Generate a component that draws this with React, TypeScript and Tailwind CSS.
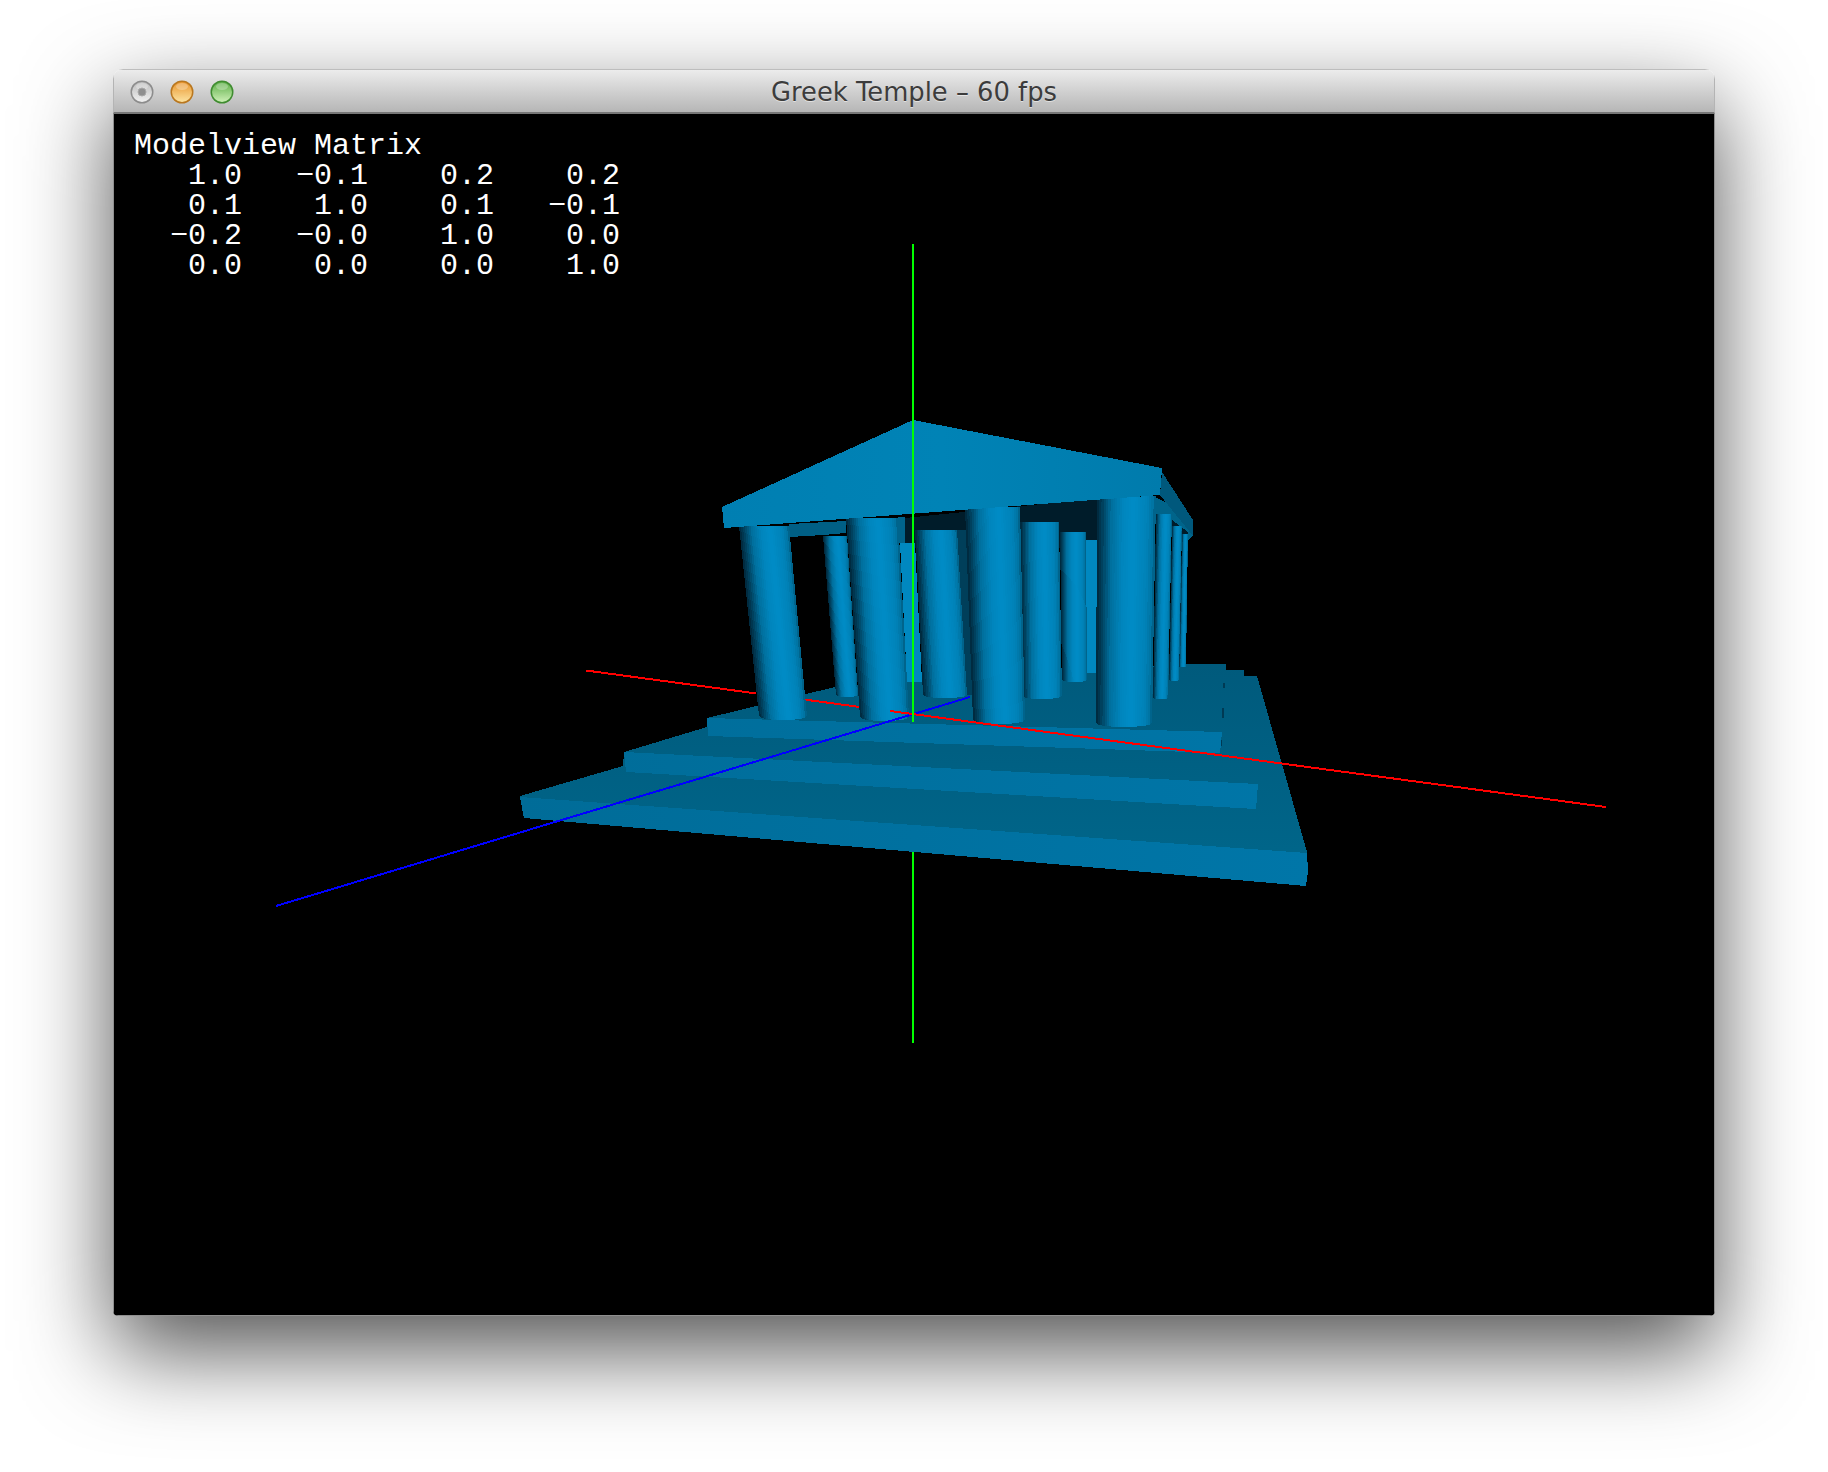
import React from 'react';

type Pt = [number, number];
type Col = { tl: Pt; tr: Pt; bl: Pt; br: Pt; curve: number; flat?: boolean };

const matrixLines = [
  'Modelview Matrix',
  '   1.0   −0.1    0.2    0.2',
  '   0.1    1.0    0.1   −0.1',
  '  −0.2   −0.0    1.0    0.0',
  '   0.0    0.0    0.0    1.0',
];

// Shading across a cylinder, left to right (t, g, b)
const shadeStops: [number, number, number][] = [
  [0, 38, 56],
  [0.1, 66, 96],
  [0.25, 112, 158],
  [0.45, 134, 190],
  [0.62, 140, 198],
  [0.85, 130, 184],
  [0.95, 116, 162],
  [1, 90, 126],
];

function shade(t: number) {
  for (let i = 1; i < shadeStops.length; i++) {
    const [t1, g1, b1] = shadeStops[i];
    const [t0, g0, b0] = shadeStops[i - 1];
    if (t <= t1) {
      const k = (t - t0) / (t1 - t0);
      return `rgb(0,${Math.round(g0 + (g1 - g0) * k)},${Math.round(b0 + (b1 - b0) * k)})`;
    }
  }
  return 'rgb(0,90,126)';
}

const lerp = (a: Pt, b: Pt, t: number): Pt => [a[0] + (b[0] - a[0]) * t, a[1] + (b[1] - a[1]) * t];

// One column, drawn as facets
function Column({ tl, tr, bl, br, curve, flat }: Col) {
  const n = flat ? 1 : 26;
  const bottom = (t: number): Pt => {
    const p = lerp(bl, br, t);
    return [p[0], p[1] + curve * Math.sqrt(Math.max(0, 1 - (2 * t - 1) ** 2))];
  };
  const strips = [];
  for (let i = 0; i < n; i++) {
    const a = i / n;
    const b = (i + 1) / n;
    const pts = [lerp(tl, tr, a), lerp(tl, tr, b), bottom(b), bottom(a)];
    strips.push(
      <polygon
        key={i}
        points={pts.map((p) => p.join(',')).join(' ')}
        fill={flat ? '#0088c0' : shade((a + b) / 2)}
      />,
    );
  }
  return <g>{strips}</g>;
}

const backColumns: Col[] = [
  { tl: [900, 543], tr: [915, 543], bl: [907, 682], br: [922, 682], curve: 0, flat: true },
  { tl: [1086, 540], tr: [1098, 540], bl: [1086, 673], br: [1098, 673], curve: 0, flat: true },
  { tl: [1182, 534], tr: [1188, 534], bl: [1179, 666], br: [1186, 666], curve: 1 },
  { tl: [1172, 526], tr: [1182, 526], bl: [1169, 680], br: [1179, 680], curve: 1 },
  { tl: [1156, 514], tr: [1172, 514], bl: [1153, 698], br: [1168, 698], curve: 1 },
  { tl: [1060, 532], tr: [1086, 532], bl: [1062, 680], br: [1087, 680], curve: 2 },
  { tl: [823, 536], tr: [847, 536], bl: [836, 695], br: [858, 695], curve: 2 },
];

const frontColumns: Col[] = [
  { tl: [1020, 522], tr: [1059, 522], bl: [1022, 696], br: [1062, 696], curve: 3 },
  { tl: [915, 530], tr: [957, 530], bl: [923, 695], br: [967, 695], curve: 3 },
  { tl: [739, 526], tr: [789, 526], bl: [759, 716], br: [807, 716], curve: 4 },
  { tl: [846, 518], tr: [898, 518], bl: [860, 717], br: [909, 717], curve: 4 },
  { tl: [965, 508], tr: [1020, 507], bl: [973, 720], br: [1025, 720], curve: 4 },
  { tl: [1097, 498], tr: [1156, 496], bl: [1096, 723], br: [1152, 723], curve: 4 },
];

function Temple() {
  return (
    <svg
      viewBox="114 114 1600 1201"
      className="absolute inset-0 w-full h-full"
      shapeRendering="crispEdges"
    >
      <defs>
        <linearGradient id="step-top" gradientUnits="userSpaceOnUse" x1="0" y1="664" x2="0" y2="850">
          <stop offset="0" stopColor="#005a7c" />
          <stop offset="1" stopColor="#006589" />
        </linearGradient>
        <linearGradient id="step-front" gradientUnits="userSpaceOnUse" x1="520" y1="0" x2="1307" y2="0">
          <stop offset="0" stopColor="#006c98" />
          <stop offset="1" stopColor="#0076a8" />
        </linearGradient>
        <linearGradient id="roof-front" gradientUnits="userSpaceOnUse" x1="722" y1="0" x2="1162" y2="0">
          <stop offset="0" stopColor="#007fb2" />
          <stop offset="0.5" stopColor="#0083b6" />
          <stop offset="1" stopColor="#007bac" />
        </linearGradient>
      </defs>

      {/* axis parts that the temple hides */}
      <line x1="1062" y1="669" x2="1068" y2="669" stroke="#0000ff" strokeWidth="2" />
      <line x1="1088" y1="661" x2="1096" y2="658" stroke="#0000ff" strokeWidth="2" />

      {/* steps, upper faces */}
      <polygon
        points="520,796 623,766 624,752 707,727 707,718 835,687 920,680 1186,664 1226,664 1226,670 1244,670 1244,676 1257,676 1307,852 1308,872 520,797"
        fill="url(#step-top)"
      />
      <rect x="1223" y="683" width="2" height="5" fill="#003a54" />
      <rect x="1222" y="708" width="2" height="10" fill="#003a54" />
      <rect x="1220" y="740" width="2" height="6" fill="#003a54" />
      {/* steps, front faces */}
      <polygon points="707,718 1222,732 1220,753 708,736" fill="url(#step-front)" />
      <polygon points="624,752 1258,784 1256,809 626,772" fill="url(#step-front)" />
      <polygon points="520,797 1307,853 1308,872 1306,886 524,818 522,808" fill="url(#step-front)" />

      {/* underside of the roof */}
      <polygon points="905,518 1100,498 1100,548 905,548" fill="#001c2a" />
      <polygon points="789,524 846,521 846,533 823,535 789,537" fill="#005f85" />
      <polygon points="898,517 905,517 905,543 898,543" fill="#00648c" />
      <polygon points="1150,495 1172,505 1193,535 1188,540 1172,522 1150,512" fill="#00648a" />
      <polygon points="1172,520 1188,532 1188,538 1172,526" fill="#001c2a" />
      <polygon points="957,530 966,530 973,695 966,695" fill="#003f5a" />

      {backColumns.map((c, i) => (
        <Column key={i} {...c} />
      ))}

      {/* axes */}
      <line x1="913" y1="852" x2="913" y2="1043" stroke="#00ff00" strokeWidth="2" />
      {frontColumns.slice(0, 2).map((c, i) => (
        <Column key={i} {...c} />
      ))}
      <line x1="586" y1="670.5" x2="756" y2="693.4" stroke="#ff0000" strokeWidth="2" />
      <line x1="804" y1="699.5" x2="860" y2="707" stroke="#ff0000" strokeWidth="2" />
      {frontColumns.slice(2).map((c, i) => (
        <Column key={i} {...c} />
      ))}
      <line x1="276" y1="906" x2="970" y2="697" stroke="#0000ff" strokeWidth="2" />
      <line x1="890" y1="711" x2="1606" y2="807" stroke="#ff0000" strokeWidth="2" />

      {/* roof */}
      <polygon points="1162,472 1193,520 1193,536 1160,495" fill="#00587c" />
      <polygon points="913,420 1162,468 1160,495 724,528 722,507" fill="url(#roof-front)" />
      <line x1="913" y1="244" x2="913" y2="722" stroke="#00ff00" strokeWidth="2" />
    </svg>
  );
}

// The three round window buttons
function WindowButton({ id, rim, top, bottom, dot }: { id: string; rim: string; top: string; bottom: string; dot?: boolean }) {
  return (
    <svg width="24" height="24" viewBox="0 0 24 24">
      <defs>
        <linearGradient id={id} x1="0" y1="0" x2="0" y2="1">
          <stop offset="0" stopColor={top} />
          <stop offset="1" stopColor={bottom} />
        </linearGradient>
      </defs>
      <circle cx="12" cy="12" r="11.5" fill={rim} />
      <circle cx="12" cy="12" r="10" fill={`url(#${id})`} />
      <ellipse cx="12" cy="6.5" rx="6" ry="3.5" fill="#ffffff" opacity="0.28" />
      {dot && <circle cx="12" cy="12" r="4" fill="#8f8f8f" stroke="#a9a9a9" strokeWidth="1" />}
    </svg>
  );
}

export default function App() {
  return (
    <div className="w-full h-[1472px] bg-white pt-[69px] pl-[113px]">
      <div className="w-[1602px] h-[1247px] flex flex-col rounded-t-[10px] rounded-b-[5px] overflow-hidden shadow-[0_35px_90px_rgba(0,0,0,0.68)]">
        <div className="relative h-[45px] shrink-0 flex items-center justify-center border-t border-x border-t-[#bdbdbd] border-x-[#b4b4b4] border-b-2 border-b-[#777777] bg-gradient-to-b from-[#ececec] to-[#b6b6b6]">
          <div className="absolute left-[16px] top-[10px] flex gap-[16px]">
            <WindowButton id="btn-close" rim="#8c8c8c" top="#bdbdbd" bottom="#f0f0f0" dot />
            <WindowButton id="btn-min" rim="#b9771f" top="#e9962f" bottom="#fce3a0" />
            <WindowButton id="btn-max" rim="#3f8c30" top="#5dae48" bottom="#cdf0b6" />
          </div>
          <span className="pt-[4px] text-[25.8px] leading-none text-[#3c3c3c] [font-family:'DejaVu_Sans',sans-serif] [text-shadow:0_1px_0_rgba(255,255,255,0.5)]">
            Greek Temple – 60 fps
          </span>
        </div>
        <div className="relative flex-1 bg-black border-x border-b border-[#8f8f8f] pl-[20px] pt-[17px]">
          <Temple />
          <pre className="relative text-white text-[30px] leading-[30px] [font-family:'Liberation_Mono',monospace]">
            {matrixLines.join('\n')}
          </pre>
        </div>
      </div>
    </div>
  );
}
